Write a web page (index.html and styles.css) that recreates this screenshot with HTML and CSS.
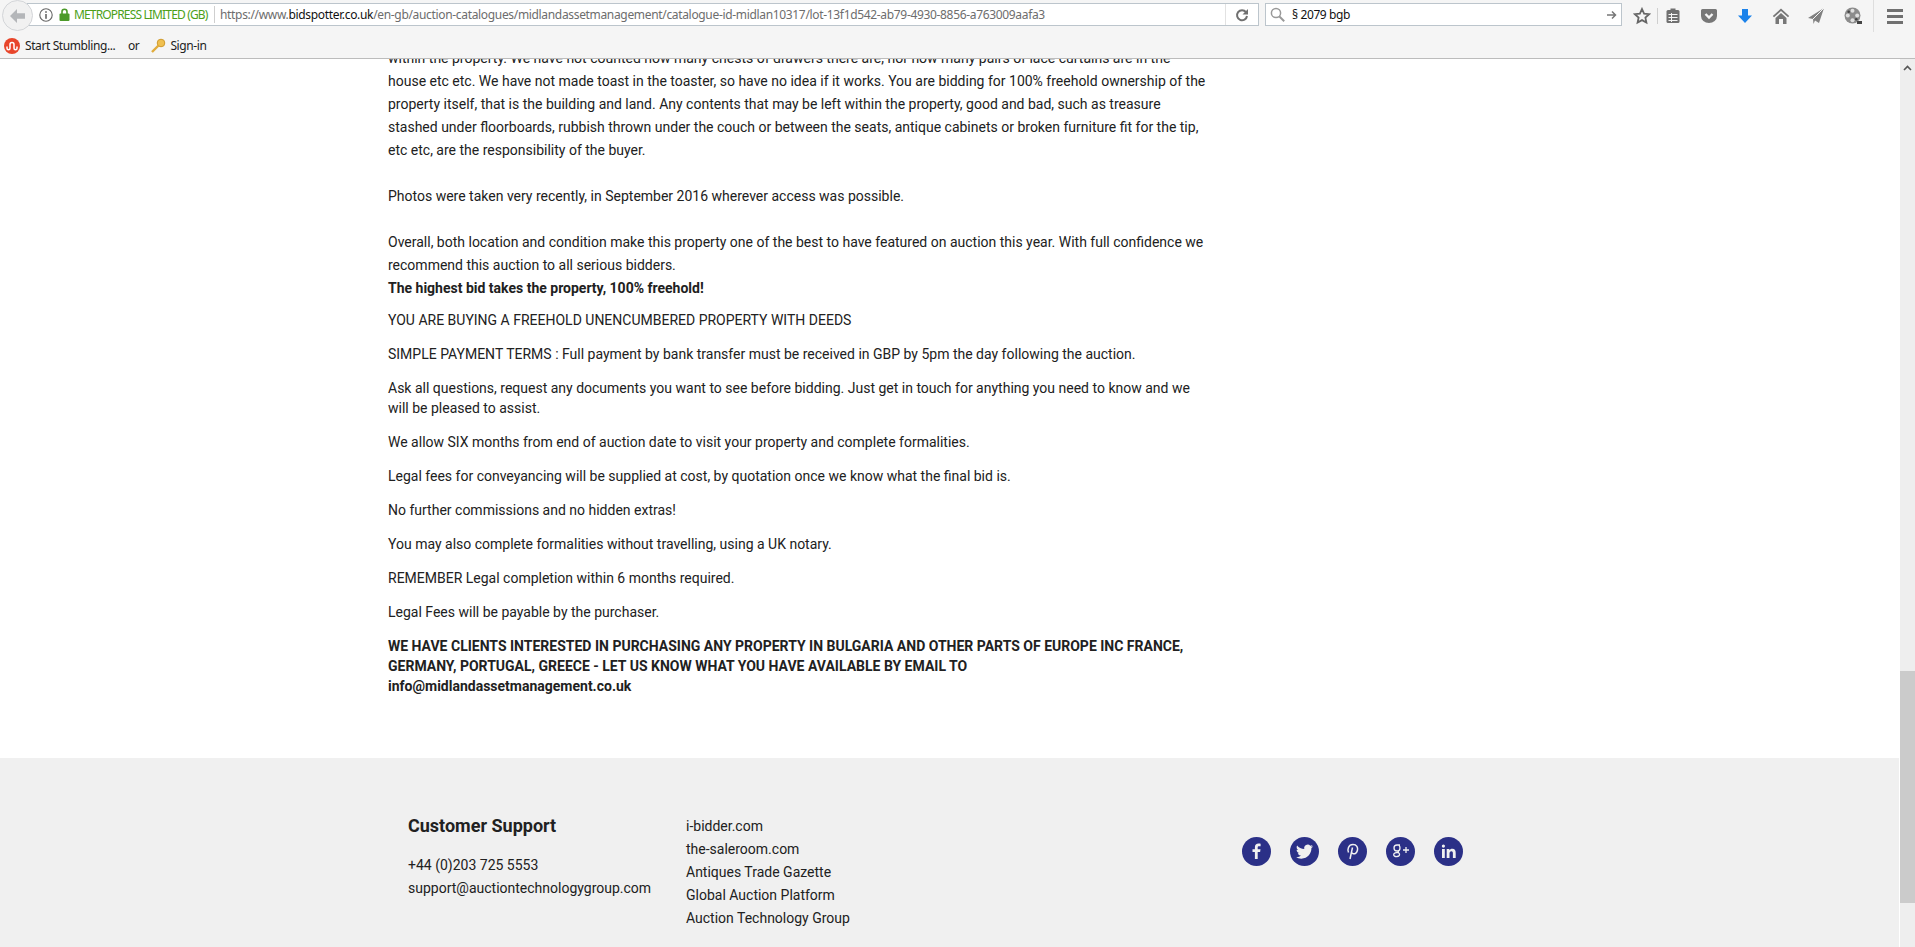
FILE: index.html
```html
<!DOCTYPE html>
<html lang="en">
<head>
  <meta charset="UTF-8">
  <title>Lot - BidSpotter</title>
  <link rel="stylesheet" href="styles.css">
</head>
<body>

  <!-- browser toolbar -->
  <div class="chrome">
    <div class="navbar">
      <div class="back-btn">
        <svg width="16" height="14" viewBox="0 0 16 14"><path d="M7 0 0 7l7 7V9.700h8V4.300H7z" fill="#b4b6b9"/></svg>
      </div>
      <div class="urlbar">
        <svg class="info-icon" width="14" height="14" viewBox="0 0 14 14"><circle cx="7" cy="7" r="6.200" fill="none" stroke="#666" stroke-width="1.100"/><rect x="6.200" y="6" width="1.600" height="4.800" fill="#666"/><rect x="6.200" y="3.200" width="1.600" height="1.600" fill="#666"/></svg>
        <svg class="lock-icon" width="11" height="13" viewBox="0 0 11 13"><path d="M3 6V3.800a2.500 2.500 0 0 1 5 0V6" fill="none" stroke="#4c9a2a" stroke-width="1.600"/><rect x="0.500" y="5.500" width="10" height="7.500" rx="1" fill="#4c9a2a"/></svg>
        <span class="org">METROPRESS LIMITED (GB)</span>
        <span class="url">https://www.<b>bidspotter.co.uk</b>/en-gb/auction-catalogues/midlandassetmanagement/catalogue-id-midlan10317/lot-13f1d542-ab79-4930-8856-a763009aafa3</span>
        <div class="reload-btn">
          <svg width="14" height="14" viewBox="0 0 14 14"><path d="M11 4.200A5 5 0 1 0 12 8" fill="none" stroke="#707070" stroke-width="2"/><path d="M13 1v5.500H7.500z" fill="#707070"/></svg>
        </div>
      </div>
      <div class="searchbar">
        <svg width="15" height="15" viewBox="0 0 15 15"><circle cx="6" cy="6" r="4.600" fill="none" stroke="#999" stroke-width="1.500"/><path d="M9.200 9.200l5 5" stroke="#999" stroke-width="2"/></svg>
        <span class="query">§ 2079 bgb</span>
        <svg width="12" height="12" viewBox="0 0 12 12"><path d="M1 6h8.500M6 2.500 9.500 6 6 9.500" fill="none" stroke="#777" stroke-width="1.500"/></svg>
      </div>
      <div class="tools">
        <svg class="tool-star" width="18" height="18" viewBox="0 0 18 18"><path d="M9 2l2.100 4.600 5 .6-3.700 3.400 1 4.900L9 13.100 4.600 15.500l1-4.900L1.900 7.200l5-.6z" fill="none" stroke="#666" stroke-width="1.800"/></svg>
        <span class="tool-sep"></span>
        <svg class="tool-list" width="16" height="18" viewBox="0 0 16 18"><rect x="1.500" y="3" width="13" height="13" rx="1.500" fill="#707070"/><rect x="5.500" y="1.500" width="5" height="3" fill="#707070"/><path d="M3.500 7.500h9M3.500 10.500h9M3.500 13.500h9M6.500 6v9" stroke="#f5f5f5" stroke-width="1"/></svg>
        <svg class="tool-pocket" width="18" height="18" viewBox="0 0 18 18"><path d="M1 3.500A1.500 1.500 0 0 1 2.500 2h13A1.500 1.500 0 0 1 17 3.500V9A8 7 0 0 1 1 9z" fill="#777"/><path d="M5.500 7 9 10.500 12.500 7" fill="none" stroke="#f5f5f5" stroke-width="2.400"/></svg>
        <svg class="tool-down" width="16" height="18" viewBox="0 0 16 18"><path d="M5 2h6v6.500h4L8 16 1 8.500h4z" fill="#1b82ea"/></svg>
        <svg class="tool-home" width="18" height="18" viewBox="0 0 18 18"><path d="M9 1.500.8 9l1.200 1.300L9 4l7 6.300L17.200 9 9 1.500zM3.500 11 9 6l5.500 5v6h-3.500v-5H7v5H3.500z" fill="#777"/></svg>
        <svg class="tool-send" width="18" height="18" viewBox="0 0 18 18"><path d="M17 1 1 11l5 1 .5 5 1.500-3.500 4 2.500z" fill="#808080"/><path d="M17 1 6 12" stroke="#f5f5f5" stroke-width="1"/></svg>
        <svg class="tool-film" width="20" height="20" viewBox="0 0 20 20"><circle cx="9.500" cy="9.500" r="8" fill="#8c8c8c"/><circle cx="9.500" cy="4.800" r="2" fill="#dfdfdf"/><circle cx="4.800" cy="9.500" r="2" fill="#dfdfdf"/><circle cx="14.200" cy="9.500" r="2" fill="#dfdfdf"/><circle cx="9.500" cy="14.200" r="2" fill="#dfdfdf"/><circle cx="5.700" cy="5.700" r="1.300" fill="#444"/><circle cx="13.300" cy="13.300" r="1.300" fill="#444"/><rect x="14" y="15" width="5" height="3" fill="#444"/></svg>
        <span class="tool-divider"></span>
        <div class="menu-btn"><span></span><span></span><span></span></div>
      </div>
    </div>
    <div class="bookmarks">
      <svg width="16" height="16" viewBox="0 0 16 16"><circle cx="8" cy="8" r="8" fill="#e8452a"/><path d="M3 8.500v1.800a1.500 1.500 0 0 0 3 0V6.500a2 2 0 0 1 4 0v3.800a1.500 1.500 0 0 0 3 0V8.500" fill="none" stroke="#fff" stroke-width="1.500"/></svg>
      <span class="bm-text">Start Stumbling...</span>
      <span class="bm-or">or</span>
      <svg width="16" height="16" viewBox="0 0 16 16"><circle cx="11" cy="5" r="3.800" fill="#f0c050" stroke="#cf9a2c"/><path d="M8.500 7.500 2 14" stroke="#e0ac3c" stroke-width="2.400"/></svg>
      <span class="bm-sign">Sign-in</span>
    </div>
  </div>

  <div class="viewport">
    <div class="page">
      <div class="content">
        <div class="description">
          within the property. We have not counted how many chests of drawers there are, nor how many pairs of lace curtains are in the<br>
          house etc etc. We have not made toast in the toaster, so have no idea if it works. You are bidding for 100% freehold ownership of the<br>
          property itself, that is the building and land. Any contents that may be left within the property, good and bad, such as treasure<br>
          stashed under floorboards, rubbish thrown under the couch or between the seats, antique cabinets or broken furniture fit for the tip,<br>
          etc etc, are the responsibility of the buyer.<br>
          <br>
          Photos were taken very recently, in September 2016 wherever access was possible.<br>
          <br>
          Overall, both location and condition make this property one of the best to have featured on auction this year. With full confidence we<br>
          recommend this auction to all serious bidders.<br>
          <b>The highest bid takes the property, 100% freehold!</b>
        </div>
        <p>YOU ARE BUYING A FREEHOLD UNENCUMBERED PROPERTY WITH DEEDS</p>
        <p>SIMPLE PAYMENT TERMS : Full payment by bank transfer must be received in GBP by 5pm the day following the auction.</p>
        <p>Ask all questions, request any documents you want to see before bidding. Just get in touch for anything you need to know and we<br>will be pleased to assist.</p>
        <p>We allow SIX months from end of auction date to visit your property and complete formalities.</p>
        <p>Legal fees for conveyancing will be supplied at cost, by quotation once we know what the final bid is.</p>
        <p>No further commissions and no hidden extras!</p>
        <p>You may also complete formalities without travelling, using a UK notary.</p>
        <p>REMEMBER Legal completion within 6 months required.</p>
        <p>Legal Fees will be payable by the purchaser.</p>
        <p class="strong">WE HAVE CLIENTS INTERESTED IN PURCHASING ANY PROPERTY IN BULGARIA AND OTHER PARTS OF EUROPE INC FRANCE,<br>GERMANY, PORTUGAL, GREECE - LET US KNOW WHAT YOU HAVE AVAILABLE BY EMAIL TO<br>info@midlandassetmanagement.co.uk</p>
      </div>

      <div class="footer">
        <div class="support">
          <h3>Customer Support</h3>
          <div>+44 (0)203 725 5553</div>
          <div>support@auctiontechnologygroup.com</div>
        </div>
        <div class="links">
          <div>i-bidder.com</div>
          <div>the-saleroom.com</div>
          <div>Antiques Trade Gazette</div>
          <div>Global Auction Platform</div>
          <div>Auction Technology Group</div>
        </div>
        <div class="social">
          <span class="social-btn"><svg width="29" height="29" viewBox="0 0 29 29"><path d="M15.700 22v-7h2.400l.4-2.800h-2.800v-1.700c0-.8.300-1.300 1.400-1.300h1.500V6.700c-.3 0-1.100-.1-2.100-.1-2.200 0-3.600 1.300-3.600 3.700v1.900h-2.400V15h2.400v7z" fill="#f0f0f0"/></svg></span>
          <span class="social-btn"><svg width="29" height="29" viewBox="0 0 29 29"><path d="M23 9.200c-.6.300-1.300.5-2 .6.700-.4 1.300-1.100 1.500-1.900-.7.400-1.400.7-2.200.9a3.500 3.500 0 0 0-6 3.200c-2.900-.1-5.500-1.500-7.200-3.600-.9 1.600-.5 3.600 1.100 4.700-.6 0-1.100-.2-1.600-.4 0 1.700 1.200 3.100 2.800 3.400-.5.100-1 .2-1.600.1.500 1.400 1.700 2.400 3.300 2.400a7 7 0 0 1-5.200 1.500c1.600 1 3.400 1.600 5.400 1.600 6.600 0 10.300-5.600 10.100-10.600.7-.5 1.300-1.200 1.800-1.900z" fill="#f0f0f0"/></svg></span>
          <span class="social-btn"><svg width="29" height="29" viewBox="0 0 29 29"><path d="M10.500 15.500c-1.400-2.800-.2-8 4.500-8 3.800 0 5 3 4.500 5.500-.5 2.700-2.500 4.200-4.300 3.700-1-.3-1.400-1-1.400-1M14.500 10.500 12 22" fill="none" stroke="#f0f0f0" stroke-width="1.500"/></svg></span>
          <span class="social-btn"><svg width="29" height="29" viewBox="0 0 29 29"><path d="M14 8h-3a3 3 0 0 0 0 6h1.500c-.8 1 0 1.500.5 2.200 1 1.200.8 3-2 3.300-2 .2-3.500-.6-3.300-2 .2-1.500 2-2.300 5-2.200M13 8.300c.8.800 1 1.800 1 2.700 0 1.800-1 3-2.500 3" fill="none" stroke="#f0f0f0" stroke-width="1.300"/><path d="M17 13h6M20 10v6" stroke="#f0f0f0" stroke-width="1.300"/></svg></span>
          <span class="social-btn"><svg width="29" height="29" viewBox="0 0 29 29"><path d="M8 12h2.800v9H8zM9.400 7.500a1.600 1.600 0 1 1 0 3.200 1.600 1.600 0 0 1 0-3.200zM12.700 12h2.700v1.300c.5-.9 1.500-1.500 2.900-1.500 2.700 0 3.400 1.700 3.400 4.300V21h-2.800v-4.400c0-1.200-.2-2.300-1.500-2.300-1.400 0-1.900 1-1.900 2.300V21h-2.800z" fill="#f0f0f0"/></svg></span>
        </div>
      </div>
    </div>

    <div class="scrollbar">
      <svg class="scroll-arrow" width="15" height="14" viewBox="0 0 15 14"><path d="M4 9l3.500-3.500L11 9" fill="none" stroke="#555" stroke-width="1.600"/></svg>
      <div class="scroll-thumb"></div>
    </div>
  </div>

</body>
</html>
```

FILE: styles.css
```css
html, body {
  margin: 0;
  padding: 0;
  height: 100%;
  overflow: hidden;
}
body {
  font-family: Roboto, sans-serif;
  font-size: 14px;
  color: #212121;
  background-color: white;
  display: flex;
  flex-direction: column;
}

/* browser toolbar */
.chrome {
  background-color: #f5f5f5;
  border-bottom: 1px solid #bcbcbc;
  height: 58px;
  flex-shrink: 0;
  font-family: "Noto Sans", sans-serif;
  font-size: 12px;
  letter-spacing: -0.4px;
}
.navbar {
  display: flex;
  align-items: flex-start;
  height: 33px;
}
.back-btn {
  box-sizing: border-box;
  width: 31px;
  height: 31px;
  margin-left: 2px;
  margin-right: -6px;
  border: 1px solid #d3d5d8;
  border-radius: 50%;
  background-color: #f1f1f1;
  display: flex;
  align-items: center;
  justify-content: center;
  flex-shrink: 0;
  position: relative;
  z-index: 1;
}
.urlbar {
  box-sizing: border-box;
  width: 1232px;
  height: 23px;
  margin-top: 3px;
  background-color: white;
  border: 1px solid #bcc5cc;
  display: flex;
  align-items: center;
  flex-shrink: 0;
}
.info-icon {
  margin-left: 11px;
}
.lock-icon {
  margin-left: 6px;
}
.org {
  box-sizing: border-box;
  color: #4c9f18;
  margin-left: 4px;
  border-right: 1px solid #cfcfcf;
  width: 141px;
  white-space: nowrap;
  letter-spacing: -0.85px;
}
.url {
  color: #6d6d6d;
  margin-left: 5px;
  flex: 1;
  white-space: nowrap;
  overflow: hidden;
  letter-spacing: -0.33px;
}
.url b {
  color: #111;
  font-weight: normal;
}
.reload-btn {
  box-sizing: border-box;
  width: 33px;
  height: 100%;
  border-left: 1px solid #e2e2e2;
  display: flex;
  align-items: center;
  justify-content: center;
}
.searchbar {
  box-sizing: border-box;
  width: 357px;
  height: 23px;
  margin-top: 3px;
  margin-left: 6px;
  padding: 0 3px 0 4px;
  background-color: white;
  border: 1px solid #bcc5cc;
  display: flex;
  align-items: center;
  gap: 7px;
  flex-shrink: 0;
}
.query {
  color: #111;
  flex: 1;
}
.tools {
  display: flex;
  align-items: center;
  flex: 1;
  height: 32px;
}
.tool-star { margin-left: 11px; }
.tool-sep {
  width: 1px;
  height: 16px;
  margin-left: 6px;
  background-color: #cfcfcf;
}
.tool-list { margin-left: 7px; }
.tool-pocket { margin-left: 19px; }
.tool-down { margin-left: 19px; }
.tool-home { margin-left: 19px; }
.tool-send { margin-left: 17px; }
.tool-film { margin-left: 18px; }
.tool-divider {
  width: 1px;
  height: 32px;
  margin-left: 10px;
  background-color: #dedede;
}
.menu-btn {
  margin-left: 13px;
  width: 16px;
  display: flex;
  flex-direction: column;
  gap: 3px;
}
.menu-btn span {
  display: block;
  height: 3px;
  background-color: #707070;
}
.bookmarks {
  display: flex;
  align-items: center;
  height: 25px;
  padding-left: 4px;
  color: #222;
}
.bm-text {
  margin-left: 5px;
  width: 92px;
  white-space: nowrap;
}
.bm-or {
  margin-left: 11px;
  margin-right: 11px;
}
.bm-sign {
  margin-left: 4px;
}

/* page + scrollbar */
.viewport {
  flex: 1;
  display: flex;
  min-height: 0;
}
.page {
  flex: 1;
  overflow: hidden;
  border-right: 1px solid white;
}
.content {
  margin-top: -12px;
  padding-left: 388px;
  width: 830px;
  height: 711px;
}
.description {
  line-height: 23px;
}
.content p {
  margin: 14px 0;
  line-height: 20px;
}
.description + p {
  margin-top: 10px;
}
.content p.strong {
  font-weight: bold;
}
.footer {
  background-color: #f0f0f0;
  height: 189px;
  display: flex;
  padding-left: 408px;
  line-height: 23px;
}
.support {
  width: 278px;
  padding-top: 56px;
}
.support h3 {
  font-size: 18px;
  font-weight: bold;
  line-height: 24px;
  margin: 0 0 16px 0;
}
.links {
  width: 556px;
  padding-top: 57px;
}
.social {
  display: flex;
  gap: 19px;
  padding-top: 79px;
}
.social-btn {
  width: 29px;
  height: 29px;
  border-radius: 50%;
  background-color: #2b3087;
  display: block;
}
.social-btn svg {
  display: block;
}
.scrollbar {
  width: 15px;
  background-color: #eeeeee;
  flex-shrink: 0;
}
.scroll-arrow {
  display: block;
  margin-top: 2px;
}
.scroll-thumb {
  height: 232px;
  margin-top: 596px;
  background-color: #cbcbcb;
}
```
